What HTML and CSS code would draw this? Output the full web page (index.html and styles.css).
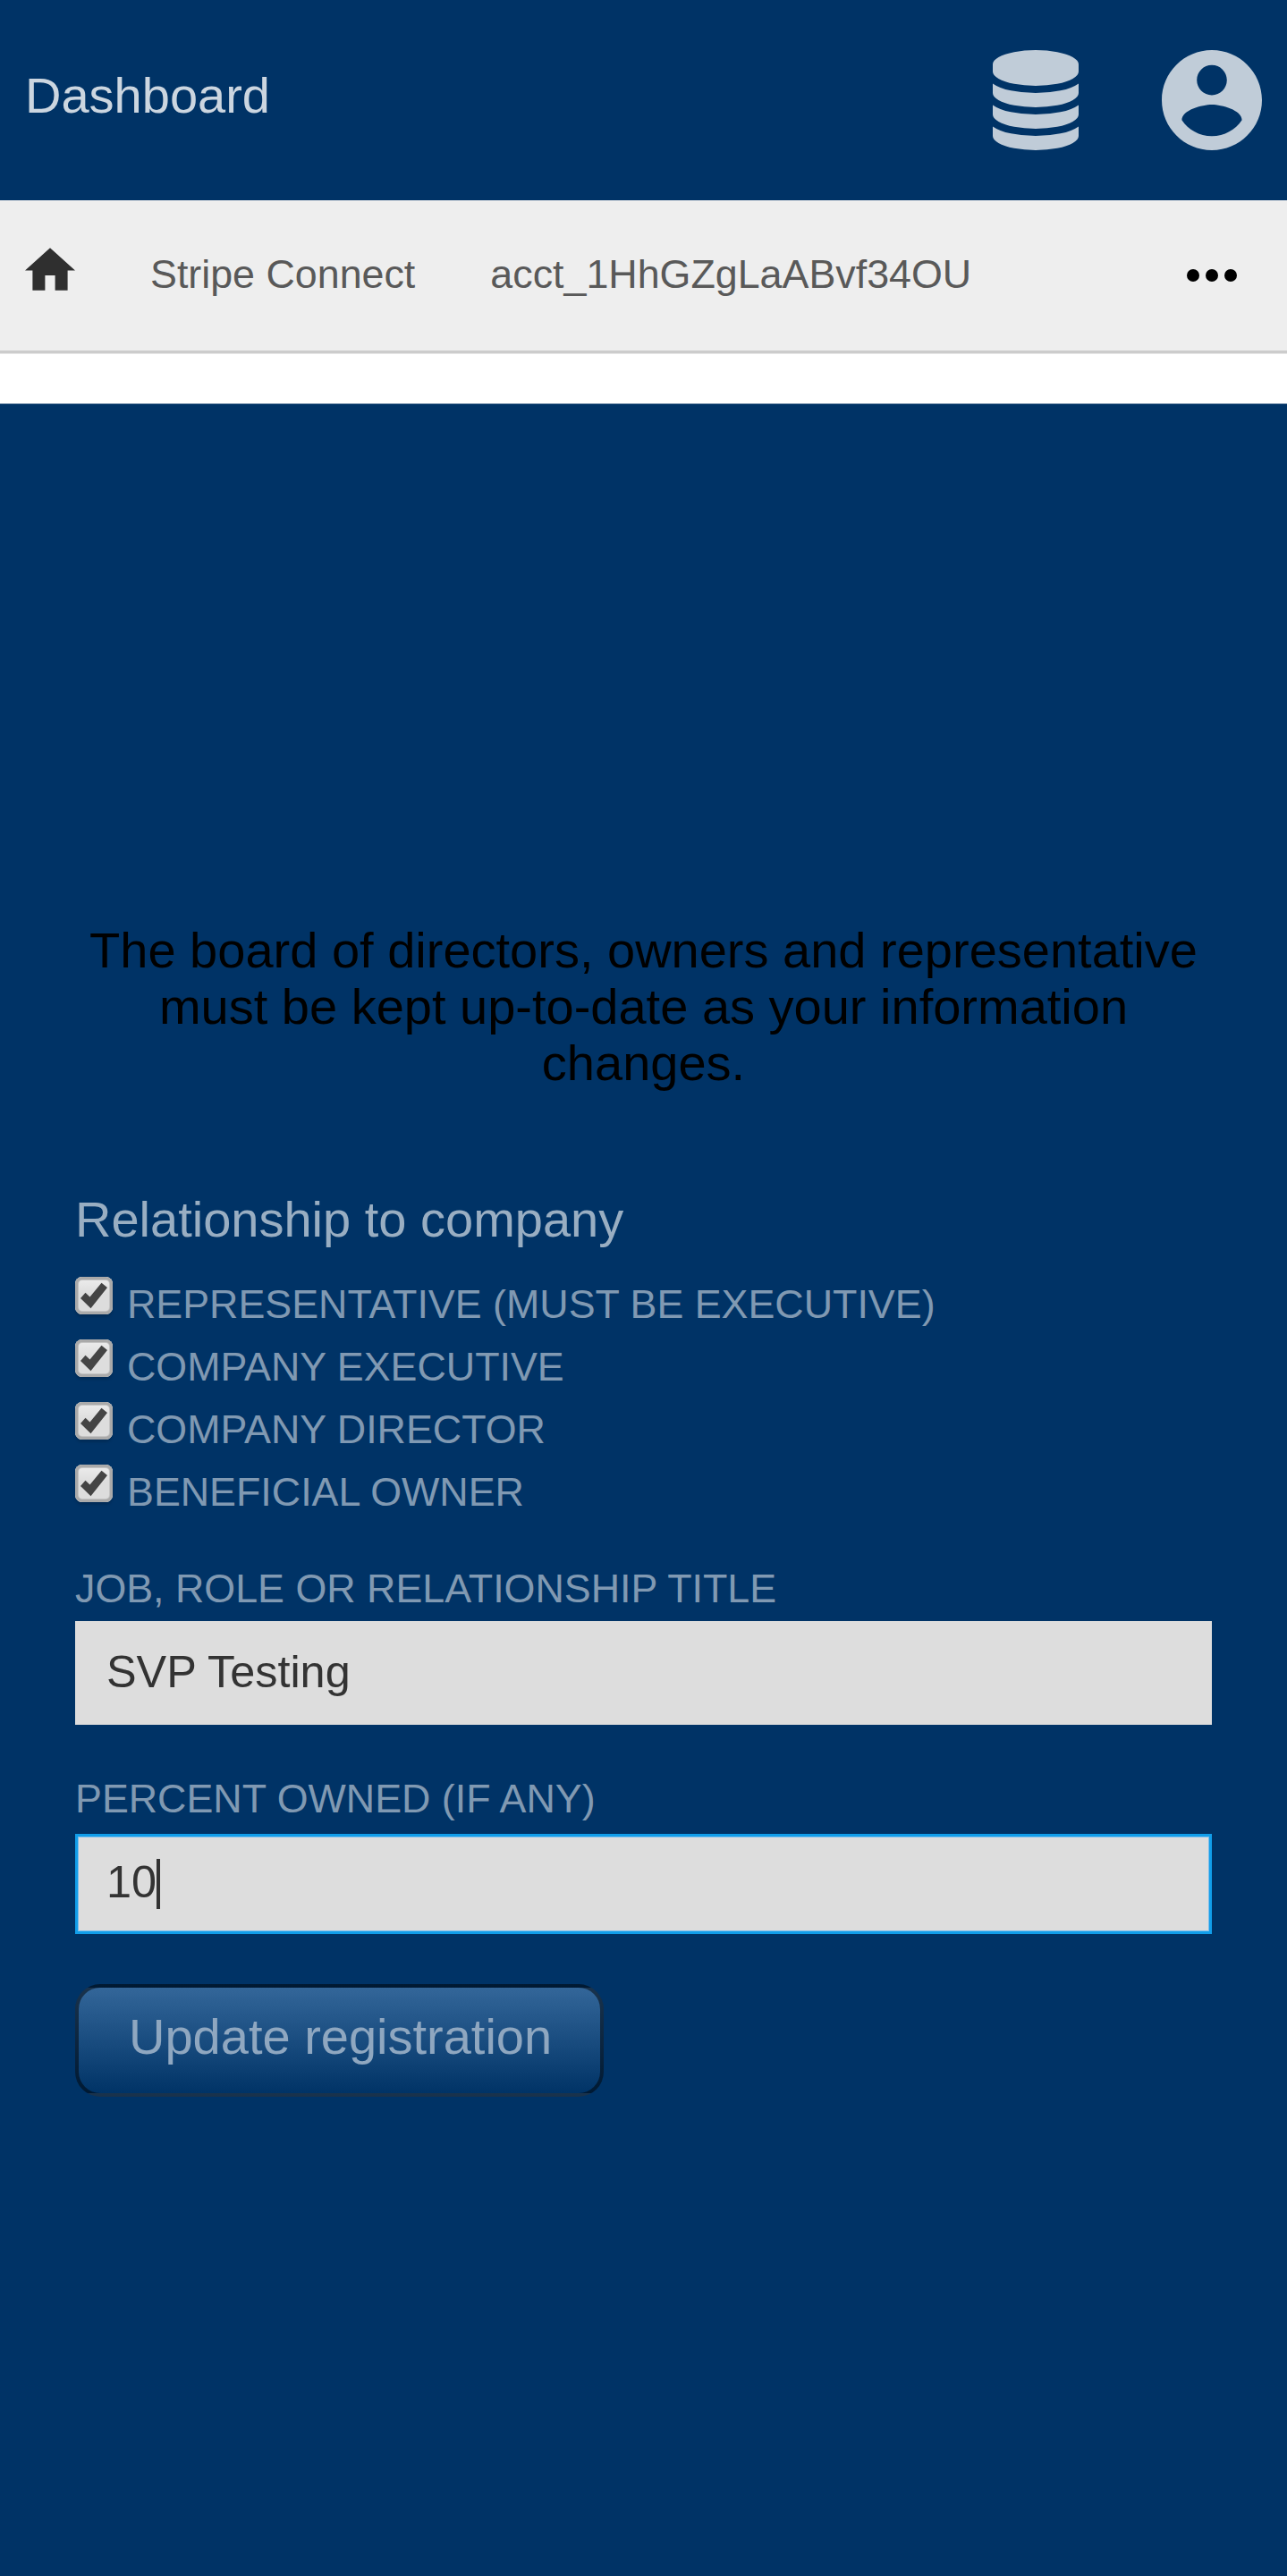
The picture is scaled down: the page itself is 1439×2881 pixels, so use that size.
FILE: index.html
```html
<!DOCTYPE html>
<html lang="en">
<head>
<meta charset="utf-8">
<title>Dashboard</title>
<link rel="stylesheet" href="styles.css">
</head>
<body>
<header class="header">
  <h1 class="brand">Dashboard</h1>
  <svg class="icon-database" viewBox="0 0 1536 1792"><path d="M768 768q237 0 443-43t325-127v170q0 69-103 128t-280 93.500-385 34.500-385-34.500-280-93.500-103-128v-170q119 84 325 127t443 43zm0 768q237 0 443-43t325-127v170q0 69-103 128t-280 93.500-385 34.500-385-34.500-280-93.500-103-128v-170q119 84 325 127t443 43zm0-384q237 0 443-43t325-127v170q0 69-103 128t-280 93.500-385 34.500-385-34.500-280-93.500-103-128v-170q119 84 325 127t443 43zm0-1152q208 0 385 34.500t280 93.500 103 128v128q0 69-103 128t-280 93.500-385 34.500-385-34.500-280-93.500-103-128v-128q0-69 103-128t280-93.500 385-34.500z"/></svg>
  <svg class="icon-account" viewBox="2 2 20 20"><path d="M12 2C6.480 2 2 6.480 2 12s4.480 10 10 10 10-4.480 10-10S17.520 2 12 2zm0 3c1.660 0 3 1.340 3 3s-1.340 3-3 3-3-1.340-3-3 1.340-3 3-3zm0 14.200c-2.500 0-4.710-1.280-6-3.220.03-1.990 4-3.080 6-3.080 1.990 0 5.970 1.090 6 3.080-1.290 1.940-3.500 3.220-6 3.220z"/></svg>
</header>
<nav class="nav">
  <svg class="icon-home" viewBox="2 3 20 17"><path d="M10 20v-6h4v6h5v-8h3L12 3 2 12h3v8z"/></svg>
  <span class="crumb">Stripe Connect</span>
  <span class="crumb">acct_1HhGZgLaABvf34OU</span>
  <svg class="icon-more" viewBox="0 0 56 14"><circle cx="7" cy="7" r="7"/><circle cx="28" cy="7" r="7"/><circle cx="49" cy="7" r="7"/></svg>
</nav>
<main class="main">
  <p class="notice">The board of directors, owners and representative must be kept up-to-date as your information changes.</p>
  <form class="form">
    <h2 class="legend">Relationship to company</h2>
    <div class="checks">
      <label class="check"><svg class="box" viewBox="0 0 42 42"><use href="#tick"/></svg>Representative (must be executive)</label>
      <label class="check"><svg class="box" viewBox="0 0 42 42"><use href="#tick"/></svg>Company executive</label>
      <label class="check"><svg class="box" viewBox="0 0 42 42"><use href="#tick"/></svg>Company director</label>
      <label class="check"><svg class="box" viewBox="0 0 42 42"><path id="tick" d="M6 24L11.500 17.700L16.500 22.500L29.500 6.800L36 12L17.500 35.200Z"/></svg>Beneficial owner</label>
    </div>
    <div class="label label-job">Job, role or relationship title</div>
    <div class="input input-job">SVP Testing</div>
    <div class="label label-percent">Percent owned (if any)</div>
    <div class="input input-focus"><span class="value">10</span><span class="caret"></span></div>
    <button class="button" type="button">Update registration</button>
  </form>
</main>
</body>
</html>
```
FILE: styles.css
```css
* { box-sizing: border-box; }
body {
  margin: 0;
  background: #fff;
  font-family: "Liberation Sans", Arial, sans-serif;
  font-size: 56px;
}
h1, h2, p { margin: 0; font-size: 56px; font-weight: 400; }
svg { display: block; flex: none; }

.header {
  display: flex;
  align-items: flex-start;
  height: 224px;
  padding: 56px 28.3px 0 28px;
  background: #003366;
}
.brand { flex: 1; padding-top: 19px; line-height: 64px; color: #ccd6e0; }
.icon-database { width: 96px; height: 112px; margin-right: 92.4px; fill: #c0ccd8; }
.icon-account { width: 112px; height: 112px; fill: #c0ccd8; }

.nav {
  display: flex;
  align-items: flex-start;
  height: 171px;
  padding: 0 56px 0 28px;
  background: #eee;
  border-bottom: 3px solid #ccc;
  box-shadow: 0 1px #e6e6e6;
}
.icon-home { width: 56px; height: 48px; margin-top: 53px; fill: #2f2f2f; }
.crumb {
  margin-left: 84px;
  padding-top: 56px;
  font-size: 44.8px;
  line-height: 52px;
  color: #595959;
}
.icon-more { width: 56px; height: 14px; margin: 77px 0 0 auto; }

.main {
  min-height: 2429px;
  margin-top: 57px;
  padding: 579px 84px 0;
  background: #003366;
  box-shadow: 0 -1px #8099b2;
}
.notice { line-height: 63px; text-align: center; color: #000; }
.form { display: flex; flex-direction: column; align-items: stretch; margin-top: 112px; }
.legend { line-height: 64px; color: #99aec2; }
.checks { margin-top: 28px; }
.check {
  display: flex;
  gap: 16px;
  height: 70px;
  font-size: 44.8px;
  line-height: 68px;
  text-transform: uppercase;
  color: #8099b2;
}
.box {
  width: 42px;
  height: 42px;
  margin-top: 4px;
  border-radius: 8px;
  background: linear-gradient(#eee, #ddd 45%, #ddd);
  box-shadow: inset 0 0 0 3px #aaa, inset 0 0 0 4px #c4c4c4, 0 3px 3px rgba(0, 0, 0, .15);
  fill: #444;
}
.label { font-size: 44.8px; line-height: 52px; text-transform: uppercase; color: #8099b2; }
.label-job { margin-top: 46px; }
.label-percent { margin-top: 56px; }
.input {
  display: flex;
  align-items: center;
  padding-left: 35px;
  background: #ddd;
  font-size: 50.4px;
  color: #333;
}
.input-job { height: 116px; margin-top: 11px; padding-bottom: 3px; }
.input-focus {
  height: 112px;
  margin-top: 14px;
  padding-left: 32px;
  border: 3px solid #119eea;
  box-shadow: inset 0 0 0 1px #80beea;
}
.value { padding-bottom: 6px; }
.caret { width: 3.500px; height: 56px; background: #333; }
.button {
  align-self: flex-start;
  height: 126px;
  margin: 56px 0 0;
  padding: 0 54px 10px 56px;
  border: 4px solid rgba(0, 0, 0, .5);
  border-radius: 28px;
  background: linear-gradient(#336699, #003366);
  font: 56px "Liberation Sans", Arial, sans-serif;
  color: #8fa7c0;
}
```
